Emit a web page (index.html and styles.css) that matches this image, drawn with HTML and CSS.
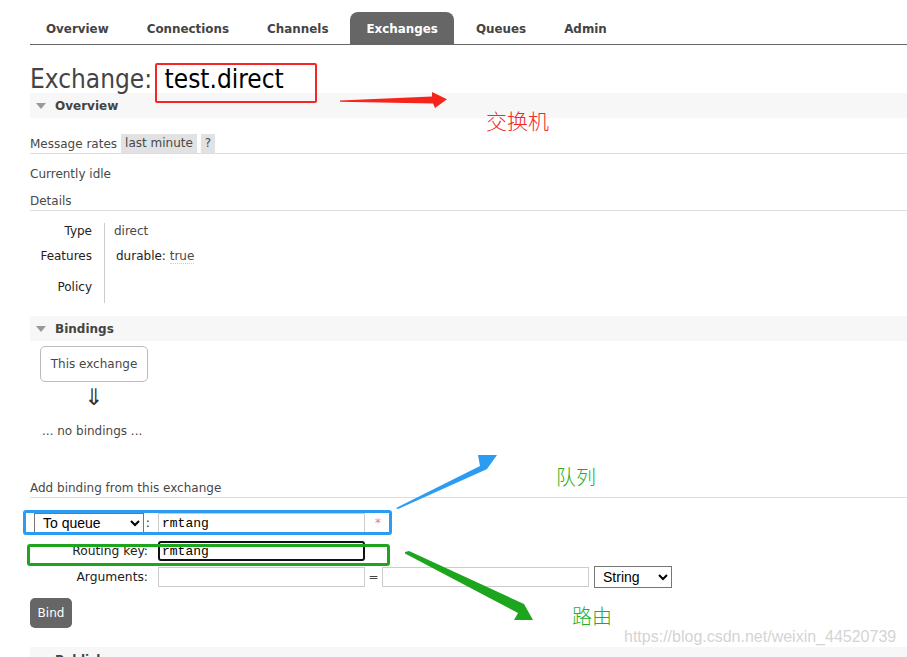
FILE: index.html
```html
<!DOCTYPE html>
<html lang="en">
<head>
<meta charset="utf-8">
<title>Exchange: test.direct</title>
<link rel="stylesheet" href="styles.css">
</head>
<body>
<div class="page">
  <nav class="tabs">
    <a class="tab">Overview</a>
    <a class="tab">Connections</a>
    <a class="tab">Channels</a>
    <a class="tab active">Exchanges</a>
    <a class="tab">Queues</a>
    <a class="tab">Admin</a>
  </nav>

  <h1 class="title">Exchange: <span class="name">test.direct</span></h1>

  <section class="section">
    <h2 class="section-head"><span class="tri"></span>Overview</h2>
    <div class="rates-row">
      <span>Message rates</span>
      <span class="chip">last minute</span>
      <span class="chip">?</span>
    </div>
    <p class="idle">Currently idle</p>
    <h3 class="sub">Details</h3>
    <div class="details">
      <div class="lbl r1">Type</div><div class="val r1">direct</div>
      <div class="lbl r2">Features</div><div class="val r2 feat"><span class="key">durable:</span> <span class="bool">true</span></div>
      <div class="lbl r3">Policy</div><div class="val r3"></div>
    </div>
  </section>

  <section class="section">
    <h2 class="section-head"><span class="tri"></span>Bindings</h2>
    <div class="this-ex">This exchange</div>
    <div class="down">&#8659;</div>
    <p class="none">... no bindings ...</p>

    <h3 class="sub add">Add binding from this exchange</h3>
    <form class="bind-form">
      <div class="row">
        <div class="lbl-cell sel-cell">
          <select class="select dest"><option>To queue</option><option>To exchange</option></select>
          <span class="colon">:</span>
        </div>
        <input class="field" type="text" value="rmtang">
        <span class="req">*</span>
      </div>
      <div class="row">
        <label class="lbl-cell">Routing key:</label>
        <input class="field focused" type="text" value="rmtang">
      </div>
      <div class="row">
        <label class="lbl-cell">Arguments:</label>
        <input class="field" type="text" value="">
        <span class="eq">=</span>
        <input class="field" type="text" value="">
        <select class="select type"><option>String</option><option>Number</option><option>Boolean</option><option>List</option></select>
      </div>
      <button class="btn" type="button">Bind</button>
    </form>
  </section>

  <section class="section">
    <h2 class="section-head"><span class="tri"></span>Publish message</h2>
  </section>
</div>

<!-- note marks drawn over the page -->
<div class="mark mark-red"></div>
<div class="mark mark-blue"></div>
<div class="mark mark-green"></div>
<svg class="arrows" width="907" height="657" viewBox="0 0 907 657">
  <polygon fill="#f5241c" points="340,100.5 432,96.5 432,92 447,99.3 435,108 433,103.5 340,101.8"/>
  <polygon fill="#2c9cf2" points="396,508 480,466 478,455 497,455 487,469 485,470 398,509"/>
  <polygon fill="#1ea51e" points="405,552 409,551 524,604 533,620 514,620 518,613 405,553.5"/>
</svg>
<div class="note note-red">交换机</div>
<div class="note note-queue">队列</div>
<div class="note note-route">路由</div>
<div class="watermark">https://blog.csdn.net/weixin_44520739</div>
</body>
</html>
```

FILE: styles.css
```css
html, body {
  margin: 0;
  padding: 0;
  background: #fff;
}

body {
  width: 907px;
  height: 657px;
  overflow: hidden;
  position: relative;
  font-family: "DejaVu Sans", Verdana, sans-serif;
  font-size: 12px;
  color: #484848;
}

.page {
  padding-left: 30px;
}

/* top navigation */
.tabs {
  display: flex;
  height: 32px;
  padding-top: 12px;
  border-bottom: 1px solid #666;
}

.tab {
  display: block;
  padding: 0 16px;
  margin-right: 6px;
  line-height: 34px;
  font-weight: bold;
  font-size: 11.9px;
  color: #444;
  border-radius: 8px 8px 0 0;
}

.tab.active {
  background: #666;
  color: #fff;
}

/* page heading */
.title {
  margin: 18px 0 0;
  height: 30px;
  line-height: 33px;
  font-size: 26px;
  font-weight: normal;
  font-stretch: condensed;
  color: #444;
  white-space: nowrap;
}

.title .name {
  margin-left: 5px;
  color: #000;
}

/* collapsible section headers */
.section-head {
  display: flex;
  align-items: center;
  height: 25px;
  margin: 0;
  background: #f7f7f7;
  font-size: 12px;
  font-weight: bold;
  color: #444;
}

.tri {
  width: 0;
  height: 0;
  margin: 1px 9px 0 6px;
  border-left: 5px solid transparent;
  border-right: 5px solid transparent;
  border-top: 6px solid #999;
}

.rates-row {
  display: flex;
  align-items: center;
  gap: 4px;
  height: 19px;
  margin-top: 16px;
  border-bottom: 1px solid #ddd;
}

.chip {
  background: #e2e2e2;
  line-height: 19px;
  padding: 0 4px;
}

.idle {
  margin: 12px 0 0;
  line-height: 16px;
}

.sub {
  margin: 11px 0 0;
  padding-bottom: 1px;
  line-height: 16px;
  font-size: 12px;
  font-weight: normal;
  border-bottom: 1px solid #ddd;
}

/* key / value table */
.details {
  display: grid;
  grid-template-columns: 74px auto;
  justify-content: start;
  margin-top: 12px;
  line-height: 16px;
}

.details .lbl {
  text-align: right;
  padding-right: 12px;
  color: #222;
}

.details .val {
  border-left: 1px solid #ccc;
  padding-left: 9px;
  min-width: 100px;
}

.details .r2 { padding-top: 9px; padding-bottom: 7px; }
.details .r3 { padding-top: 8px; padding-bottom: 8px; }
.details .feat { padding-left: 11px; }
.details .key { color: #222; }
.details .bool { border-bottom: 1px dotted #ccc; }

.section + .section {
  margin-top: 13px;
}

/* bindings diagram */
.this-ex {
  width: 106px;
  height: 34px;
  margin: 5px 0 0 10px;
  line-height: 34px;
  text-align: center;
  border: 1px solid #bbb;
  border-radius: 5px;
}

.down {
  width: 108px;
  height: 22px;
  margin-left: 10px;
  margin-top: 4px;
  text-align: center;
  font-size: 23px;
  line-height: 22px;
  color: #333;
}

.none {
  margin: 15px 0 0 12px;
  line-height: 16px;
}

.sub.add {
  margin-top: 41px;
}

/* binding form */
.bind-form {
  margin-top: 15px;
}

.row {
  display: flex;
  align-items: center;
  height: 20px;
}

.row + .row {
  margin-top: 8px;
}

.row:nth-child(3) {
  margin-top: 6px;
}

.lbl-cell {
  width: 118px;
  margin-right: 10px;
  text-align: right;
  font-size: 12.3px;
  color: #222;
}

.sel-cell {
  display: flex;
  align-items: center;
  justify-content: space-between;
  padding-left: 4px;
  width: 114px;
}

.colon {
  margin-right: -2px;
}

.field {
  box-sizing: border-box;
  width: 207px;
  height: 20px;
  margin: 0;
  padding: 0 3px;
  border: 1px solid #ccc;
  font-family: "Liberation Mono", "Courier New", monospace;
  font-size: 13px;
  color: #000;
  outline: none;
}

.field.focused {
  border: 2px solid #111;
  border-radius: 3px;
  padding: 0 2px;
}

.select {
  box-sizing: border-box;
  height: 20px;
  margin: 0;
  padding-left: 4px;
  font-family: "Liberation Sans", Arial, sans-serif;
  font-size: 14px;
  color: #000;
  background: #fff;
  border: 1px solid #767676;
  border-radius: 0;
}

.select.dest { width: 110px; }

.select.type {
  width: 78px;
  height: 22px;
  margin-left: 5px;
}

.req {
  margin-left: 10px;
  color: #f08080;
  font-size: 12px;
}

.eq {
  width: 17px;
  text-align: center;
  color: #444;
}

.btn {
  display: block;
  margin-top: 11px;
  width: 42px;
  height: 30px;
  padding: 0;
  border: none;
  border-radius: 5px;
  background: #666;
  color: #fff;
  font-family: "DejaVu Sans", Verdana, sans-serif;
  font-size: 12px;
}

.section:last-child {
  margin-top: 19px;
}

/* annotation marks on top of the page */
.mark {
  position: absolute;
  box-sizing: border-box;
  border-radius: 2px;
}

.mark-red {
  left: 155px;
  top: 63px;
  width: 162px;
  height: 40px;
  border: 2px solid #f52626;
}

.mark-blue {
  left: 23px;
  top: 510px;
  width: 369px;
  height: 25px;
  border: 3px solid #2c9cf2;
  border-radius: 3px;
}

.mark-green {
  left: 27px;
  top: 544px;
  width: 363px;
  height: 22px;
  border: 3px solid #1ea51e;
  border-radius: 3px;
}

.arrows {
  position: absolute;
  left: 0;
  top: 0;
  pointer-events: none;
}

.note {
  position: absolute;
  font-family: "Noto Sans CJK SC", sans-serif;
  font-size: 20px;
  line-height: 24px;
  font-weight: 300;
}

.note-red {
  left: 486px;
  top: 108px;
  font-size: 21px;
  color: #f52626;
}

.note-queue {
  left: 556px;
  top: 465px;
  color: #1eb01e;
}

.note-route {
  left: 572px;
  top: 604px;
  color: #1eb01e;
}

.watermark {
  position: absolute;
  left: 624px;
  top: 628px;
  font-family: "Liberation Sans", Arial, sans-serif;
  font-size: 16px;
  color: rgba(200, 200, 200, 0.8);
}
```
